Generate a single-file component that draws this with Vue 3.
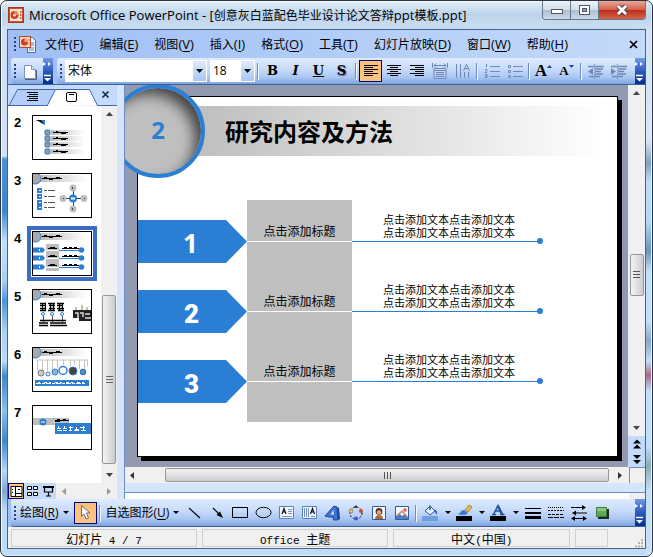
<script setup>
import { ref } from 'vue'

const menus = [
  ['文件', 'F'], ['编辑', 'E'], ['视图', 'V'], ['插入', 'I'], ['格式', 'O'],
  ['工具', 'T'], ['幻灯片放映', 'D'], ['窗口', 'W'], ['帮助', 'H'],
]
const fontName = ref('宋体')
const fontSize = ref('18')
const current = ref(4)
const thumbs = [2, 3, 4, 5, 6, 7]
const steps = ['1', '2', '3']
</script>

<template>
  <div class="window">
    <header class="titlebar">
      <svg class="app-icon" width="16" height="16" viewBox="0 0 16 16">
        <rect x="0.5" y="0.5" width="15" height="15" fill="#c9512b" stroke="#a33a1d" />
        <rect x="2" y="2" width="12" height="12" fill="#fbe3d3" />
        <circle cx="6.5" cy="8" r="4" fill="#c8401c" />
        <circle cx="6.5" cy="8" r="1.6" fill="#f8d8c4" />
        <path d="M6.500 8V4A4 4 0 0 1 10.500 8Z" fill="#e89068" />
        <path d="M12 5h1.500M12 8h1.500M12 11h1.500" stroke="#b03c1a" stroke-width="1.500" />
      </svg>
      <h1><span class="latin">Microsoft Office PowerPoint - [</span>创意灰白蓝配色毕业设计论文答辩<span class="latin">ppt</span>模板<span class="latin">.ppt]</span></h1>
      <div class="controls">
        <button class="ctl" aria-label="最小化">
          <svg width="14" height="12" viewBox="0 0 14 12"><rect x="1.500" y="5.500" width="11" height="4" fill="#fff" stroke="#535666" /></svg>
        </button>
        <button class="ctl" aria-label="还原">
          <svg width="14" height="12" viewBox="0 0 14 12"><rect x="1.500" y="1.500" width="10" height="9" fill="#fff" stroke="#535666" /><rect x="4.500" y="4.500" width="4" height="3" fill="#8aa4c4" stroke="#535666" /></svg>
        </button>
        <button class="ctl close" aria-label="关闭">
          <svg width="14" height="12" viewBox="0 0 14 12"><path d="M3 2l8 8M11 2l-8 8" stroke="#5a4250" stroke-width="5" /><path d="M3 2l8 8M11 2l-8 8" stroke="#fff" stroke-width="2.800" /></svg>
        </button>
      </div>
    </header>

    <main class="client">
      <nav class="menubar">
        <i class="grip"></i>
        <svg class="doc-icon" width="18" height="17" viewBox="0 0 18 17">
          <path d="M8.500 1.500h5l3 3v12h-8z" fill="#f3f6fc" stroke="#4b6ba8" />
          <path d="M12 7h3M12 9h3M10 12h5M10 14h5" stroke="#5f84c4" />
          <rect x="0.500" y="0.500" width="11" height="11" fill="#f6d4c4" stroke="#b8482a" />
          <circle cx="5.500" cy="6" r="3.500" fill="#c8401c" />
          <path d="M5.500 6V2.500A3.500 3.500 0 0 1 9 6Z" fill="#f0a884" />
          <path d="M9.500 4h1M9.500 8h1" stroke="#b03c1a" />
        </svg>
        <div class="menu-items">
          <button v-for="m in menus" :key="m[1]">{{ m[0] }}<span class="latin">(<u>{{ m[1] }}</u>)</span></button>
        </div>
        <button class="menu-close" aria-label="关闭文档">
          <svg width="9" height="9" viewBox="0 0 9 9"><path d="M1 1l7 7M8 1l-7 7" stroke="#000" stroke-width="1.700" /></svg>
        </button>
      </nav>

      <div class="toolbars">
        <div class="bar short">
          <i class="grip"></i>
          <button class="tool" aria-label="新建">
            <svg width="17" height="17" viewBox="0 0 17 17"><path d="M3.500 2.500h7l4 4v9h-11z" fill="#fff" stroke="#7f93b5" /><path d="M10.500 2.500v4h4" fill="#d5dff0" stroke="#7f93b5" /><path d="M4 16.500h11.500V7" fill="none" stroke="#4c5f8a" /></svg>
          </button>
          <button class="cap" aria-label="更多按钮">
            <svg width="9" height="22" viewBox="0 0 9 22"><path d="M0 2l3 2-3 2zM5 2l3 2-3 2z" fill="#fff" /><path d="M1 15.500h7" stroke="#fff" stroke-width="1.500" /><path d="M1 18h7l-3.500 3.500z" fill="#fff" /></svg>
          </button>
        </div>
        <div class="bar long">
          <i class="grip"></i>
          <span class="combo font">
            <select v-model="fontName" aria-label="字体"><option>宋体</option><option>黑体</option></select>
            <svg width="13" height="20" viewBox="0 0 13 20"><path d="M3 8h7l-3.500 4z" fill="#000" /></svg>
          </span>
          <span class="combo size">
            <select v-model="fontSize" aria-label="字号"><option>18</option><option>24</option></select>
            <svg width="13" height="20" viewBox="0 0 13 20"><path d="M3 8h7l-3.500 4z" fill="#000" /></svg>
          </span>
          <i class="sep"></i>
          <button class="tool letter">B</button>
          <button class="tool letter it">I</button>
          <button class="tool letter un">U</button>
          <button class="tool letter sh">S</button>
          <i class="sep"></i>
          <button class="tool on" aria-label="左对齐">
            <svg width="16" height="14" viewBox="0 0 16 14"><path d="M1 1.500h14M1 3.500h9M1 5.500h14M1 7.500h9M1 9.500h14M1 11.500h9" stroke="#000" /></svg>
          </button>
          <button class="tool" aria-label="居中">
            <svg width="16" height="14" viewBox="0 0 16 14"><path d="M1 1.500h14M4 3.500h8M1 5.500h14M4 7.500h8M1 9.500h14M4 11.500h8" stroke="#000" /></svg>
          </button>
          <button class="tool" aria-label="右对齐">
            <svg width="16" height="14" viewBox="0 0 16 14"><path d="M1 1.500h14M6 3.500h9M1 5.500h14M6 7.500h9M1 9.500h14M6 11.500h9" stroke="#000" /></svg>
          </button>
          <button class="tool" aria-label="分散对齐">
            <svg width="16" height="16" viewBox="0 0 16 16"><path d="M0.500 0v5M15.500 0v5M2 2.500h12M4 0.500l-2 2 2 2M12 0.500l2 2-2 2M2 5.500h12v10h-12zM2 7.500h12M4 9.500h8M4 11.500h8M4 13.500h8" fill="none" stroke="#7089b4" /></svg>
          </button>
          <button class="tool" aria-label="更改文字方向">
            <svg width="16" height="16" viewBox="0 0 16 16"><path d="M1.500 1v14M5.500 1v14M9.500 9v6M13.500 9v6M8.500 8l3-7 3 7M9.500 5.500h4" fill="none" stroke="#7089b4" /></svg>
          </button>
          <i class="sep"></i>
          <button class="tool" aria-label="编号">
            <svg width="16" height="16" viewBox="0 0 16 16"><path d="M6 3.500h10M6 8.500h10M6 13.500h10M2.500 1v3M1 6.500h2v1l-2 2h2M1 11.500h2v3h-2M1 13h2" fill="none" stroke="#7089b4" /></svg>
          </button>
          <button class="tool" aria-label="项目符号">
            <svg width="16" height="16" viewBox="0 0 16 16"><path d="M6 3.500h10M6 8.500h10M6 13.500h10" stroke="#7089b4" /><path d="M1.500 2.500h2v2h-2zM1.500 7.500h2v2h-2zM1.500 12.500h2v2h-2z" fill="none" stroke="#7089b4" /></svg>
          </button>
          <i class="sep"></i>
          <button class="tool letter grow" aria-label="增大字号">A<svg width="5" height="14" viewBox="0 0 5 14"><path d="M0 4l2.500-3 2.500 3z" fill="#1c449c" /></svg></button>
          <button class="tool letter shrink" aria-label="减小字号">A<svg width="5" height="14" viewBox="0 0 5 14"><path d="M0 1h5l-2.500 3z" fill="#1c449c" /></svg></button>
          <i class="sep"></i>
          <button class="tool" aria-label="减少缩进量">
            <svg width="16" height="15" viewBox="0 0 16 15"><path d="M0 2.500h16M7 5h8M7 7.500h6M7 10h8M1 12.500h11" stroke="#7089b4" stroke-width="1.500" /><path d="M5 4v7L0 7.500z" fill="#7089b4" /><path d="M6.500 0v15" stroke="#7089b4" stroke-dasharray="1 1" /></svg>
          </button>
          <button class="tool" aria-label="增加缩进量">
            <svg width="16" height="15" viewBox="0 0 16 15"><path d="M0 2.500h16M7 5h8M7 7.500h6M7 10h8M1 12.500h11" stroke="#7089b4" stroke-width="1.500" /><path d="M0 4v7l5-3.500z" fill="#7089b4" /><path d="M6.500 0v15" stroke="#7089b4" stroke-dasharray="1 1" /></svg>
          </button>
          <button class="cap" aria-label="更多按钮">
            <svg width="9" height="22" viewBox="0 0 9 22"><path d="M0 2l3 2-3 2zM5 2l3 2-3 2z" fill="#fff" /><path d="M1 15.500h7" stroke="#fff" stroke-width="1.500" /><path d="M1 18h7l-3.500 3.500z" fill="#fff" /></svg>
          </button>
        </div>
      </div>

      <div class="workspace">
        <aside class="pane">
          <div class="tabs">
            <svg class="tab-shapes" width="109" height="18" viewBox="0 0 109 18">
              <path d="M0 17.500H1L9.500 1.500H46.500L50 7 44 17.500z" fill="#b4cef8" stroke="#3f66b8" />
              <path d="M39 18L47.500 1.500H81.500L89.500 17.500" fill="#fff" stroke="#3f66b8" />
              <path d="M0 17.500h39M89 17.500h20" stroke="#3f66b8" />
              <path d="M19 4.500h11M21 6.500h9M19 8.500h11M21 10.500h9M19 12.500h11" stroke="#000" />
              <rect x="58.500" y="4.500" width="10" height="9" rx="1.500" fill="none" stroke="#000" />
              <path d="M61 6.500h5" stroke="#000" />
              <path d="M94.500 3.500l6 6M100.500 3.500l-6 6" stroke="#1a2c50" stroke-width="1.700" />
            </svg>
          </div>
          <div class="list-area">
            <ol class="thumbs">
              <li v-for="n in thumbs" :key="n" :class="{ current: n === current }" @click="current = n">
                <b>{{ n }}</b>
                <span class="frame">
                  <svg width="58" height="43" viewBox="0 0 58 43">
                    <defs>
                      <linearGradient id="fade"><stop offset="0" stop-color="#bdbdbd" /><stop offset="1" stop-color="#fff" /></linearGradient>
                    </defs>
                    <g v-if="n > 2 && n < 7">
                      <rect x="7" y="1" width="47" height="7" fill="url(#fade)" />
                      <circle cx="2.500" cy="4.500" r="5.500" fill="#a9a9a9" stroke="#2a7fd5" />
                      <path d="M9 4.500h20M11 3.500h3M16 5.500h4M23 3.500h4" stroke="#000" fill="none" />
                    </g>
                    <g v-if="n === 2">
                      <path d="M2 4h10v5l-4-2-2-2z" fill="#2a7fd5" /><path d="M3 4h5l3 4z" fill="#111" />
                      <g v-for="y in [14, 20, 26, 33]" :key="y">
                        <rect x="18" :y="y" width="34" height="5" fill="url(#fade)" />
                        <rect x="12" :y="y" width="5" height="5" rx="1" fill="#999" stroke="#2a7fd5" />
                        <path :d="`M20 ${y + 2.5}h15M23 ${y + 1.5}h2M28 ${y + 3.5}h5`" stroke="#000" fill="none" />
                      </g>
                    </g>
                    <g v-else-if="n === 3">
                      <g v-for="y in [14, 20, 26, 31]" :key="y">
                        <rect x="4" :y="y" width="5" height="5" fill="#2a7fd5" /><path :d="`M6 ${y + 2.5}h2`" stroke="#fff" />
                        <path :d="`M11 ${y + 2.5}h3M15 ${y + 2.5}h7`" stroke="#555" />
                      </g>
                      <path d="M40.500 15v20M32 24.500h18" stroke="#333" />
                      <circle v-for="p in [[40, 14], [30, 24.5], [51, 24.5], [40, 35]]" :key="p.join()" :cx="p[0]" :cy="p[1]" r="3.400" fill="#bdbdbd" />
                      <circle cx="40" cy="24.500" r="4" fill="#2a7fd5" /><path d="M38 24.500h4" stroke="#fff" stroke-width="2" />
                      <path d="M39.500 13v2M30 24.500h1M51 24.500h1M39.500 34v2" stroke="#444" />
                    </g>
                    <g v-else-if="n === 4">
                      <rect x="13" y="12" width="13" height="27" fill="#bdbdbd" />
                      <g v-for="y in [18, 26, 35]" :key="y">
                        <path :d="`M0 ${y - 2.5}h10l2 2.500-2 2.500H0z`" fill="#2a7fd5" /><path :d="`M6.500 ${y - 1}v2`" stroke="#fff" />
                        <path :d="`M15 ${y - 1.5}h9M17 ${y - 2.5}h5`" stroke="#000" fill="none" />
                        <path :d="`M13 ${y + 0.5}h13`" stroke="#fff" />
                        <path :d="`M26 ${y + 0.5}h22`" stroke="#2a7fd5" />
                        <path :d="`M29 ${y - 1.5}h17M31 ${y - 2.5}h3M36 ${y - 2.5}h3M41 ${y - 2.5}h3`" stroke="#000" fill="none" />
                        <circle cx="48.500" :cy="y" r="2.800" fill="#2a7fd5" />
                      </g>
                    </g>
                    <g v-else-if="n === 5">
                      <path d="M7 13.500h6M15 13.500h7M24 13.500h7M7 15.500h6M16 15.500h6M24 15.500h6M7 18.500h6M16 18.500h6M24 18.500h7M7 20.500h6M15 20.500h7M25 20.500h6" stroke="#000" stroke-width="1.500" />
                      <path d="M9.500 13v8M12.500 13v8M17.500 13v8M20.500 13v8M26.500 13v8M29.500 13v8" stroke="#000" />
                      <circle v-for="x in [10, 19, 29]" :key="x" :cx="x" cy="24" r="1.500" fill="#fff" stroke="#2a7fd5" />
                      <path d="M10.500 26v6M19.500 26v6M29.500 26v6" stroke="#555" />
                      <path d="M7 30.500h26M6 33h9M17 33h16M6 35.500h9M17 35.500h17" stroke="#000" stroke-width="1.500" />
                      <path d="M43 20v-3M49 20v-5M54 20v-3" stroke="#b4c8a8" stroke-width="2" />
                      <path d="M40 20h18v11H46v-3h-6z" fill="#222" /><path d="M42 23h3v5M47 23h3v4M52 24h5M52 28h6" stroke="#ddd" stroke-width="1.500" fill="none" />
                    </g>
                    <g v-else-if="n === 6">
                      <path d="M3.500 12h51M4.500 12v11M9.500 12v10M14.500 12v11M19.500 12v9M24.500 12v8M30.500 12v5M37.500 12v6M41.500 12v5M46.500 12v9M51.500 12v9M54.500 12v6" stroke="#c4c4c4" />
                      <circle cx="8" cy="25" r="3" fill="#ccc" stroke="#777" /><circle cx="15" cy="26" r="2" fill="#eee" stroke="#2a7fd5" />
                      <circle cx="22" cy="24" r="3" fill="#8bb5df" stroke="#2a7fd5" /><circle cx="30" cy="22.500" r="4" fill="#fff" stroke="#2a7fd5" stroke-width="1.500" />
                      <circle cx="40" cy="23" r="4" fill="#444" stroke="#2a7fd5" /><circle cx="50" cy="24" r="2.500" fill="#888" stroke="#2a7fd5" stroke-width="1.500" />
                      <rect x="2" y="32" width="54" height="6" fill="#2a7fd5" />
                      <path d="M3 35.500h50" stroke="#fff" stroke-dasharray="5 1 3 1" /><path d="M5 34.500h47" stroke="#fff" stroke-dasharray="2 4 3 2" />
                    </g>
                    <g v-else>
                      <rect x="0" y="12" width="36" height="7" fill="#bdbdbd" /><circle cx="10" cy="16" r="3.500" fill="#2a7fd5" /><path d="M8 16h4" stroke="#fff" />
                      <path d="M22 14.500h14M24 13.500h3M30 13.500h3M22 15.500h5" stroke="#000" fill="none" />
                      <rect x="22" y="17" width="36" height="11" fill="#2a7fd5" />
                      <path d="M24 22.500h4M30 22.500h4M36 21.500h4M42 23.500h4M47 21.500h5M24 24.500h5M30 24.500h4M36 24.500h3M41 24.500h5M48 24.500h5M25.500 20v2M31.500 20v2M37.500 20v5M43.500 21v4M50.500 20v4" stroke="#fff" fill="none" />
                    </g>
                  </svg>
                </span>
              </li>
            </ol>
            <div class="vscroll">
              <svg class="arrow" width="7" height="4" viewBox="0 0 7 4"><path d="M0 4h7L3.500 0z" fill="#444" /></svg>
              <i class="gap-pane"></i>
              <span class="thumb-v"><svg width="7" height="8" viewBox="0 0 7 8"><path d="M0 .5h7M0 3.500h7M0 6.500h7" stroke="#666" /></svg></span>
              <svg class="arrow" width="7" height="4" viewBox="0 0 7 4"><path d="M0 0h7L3.500 4z" fill="#444" /></svg>
            </div>
          </div>
          <div class="views">
            <button class="on" aria-label="普通视图"><svg width="13" height="11" viewBox="0 0 13 11"><path d="M1 .5h11v10H1zM5.500 .5v10M5.500 7.500h6.500" fill="#fff" stroke="#000" /><path d="M2.500 3v1M2.500 6v1M8 3.500h2" stroke="#000" /></svg></button>
            <button aria-label="浏览视图"><svg width="11" height="11" viewBox="0 0 11 11"><path d="M.5 .5h4v3h-4zM6.500 .5h4v3h-4zM.5 6.500h4v3h-4zM6.500 6.500h4v3h-4z" fill="#fff" stroke="#000" /></svg></button>
            <button aria-label="幻灯片放映"><svg width="11" height="11" viewBox="0 0 11 11"><path d="M0 1h11" stroke="#000" stroke-width="2" /><path d="M1.500 1v5h8v-5M5.500 6v4M3 10h5" fill="none" stroke="#000" stroke-width="1.200" /></svg></button>
            <span class="mini-scroll">
              <svg width="4" height="7" viewBox="0 0 4 7"><path d="M4 0v7L0 3.500z" fill="#999" /></svg>
              <svg width="4" height="7" viewBox="0 0 4 7"><path d="M0 0v7l4-3.500z" fill="#999" /></svg>
            </span>
          </div>
        </aside>

        <section class="editor">
          <div class="stage-row">
            <div class="stage">
              <article class="slide">
                <h2>研究内容及方法</h2>
                <div class="steps">
                  <div class="arrows">
                    <div v-for="s in steps" :key="s" class="cell">
                      <svg width="109" height="43" viewBox="0 0 109 43"><path d="M0 0h88l21 21.500L88 43H0z" fill="#2a7fd5" /></svg>
                      <strong :class="{ poster: s !== '1' }">{{ s }}</strong>
                    </div>
                  </div>
                  <div class="labels">
                    <div v-for="s in steps" :key="s" class="cell"><span>点击添加标题</span></div>
                  </div>
                  <div class="notes">
                    <div v-for="s in steps" :key="s" class="cell">
                      <p>点击添加文本点击添加文本<br>点击添加文本点击添加文本</p>
                      <i class="dot"></i>
                    </div>
                  </div>
                </div>
              </article>
              <div class="badge">2</div>
            </div>
            <div class="vscroll main">
              <svg class="arrow" width="7" height="4" viewBox="0 0 7 4"><path d="M0 4h7L3.500 0z" fill="#444" /></svg>
              <i class="gap-main"></i>
              <span class="thumb-v short-thumb"><svg width="7" height="8" viewBox="0 0 7 8"><path d="M0 .5h7M0 3.500h7M0 6.500h7" stroke="#555" /></svg></span>
              <i class="rest"></i>
              <svg class="arrow" width="7" height="4" viewBox="0 0 7 4"><path d="M0 0h7L3.500 4z" fill="#444" /></svg>
              <span class="pager">
                <svg width="8" height="25" viewBox="0 0 8 25"><path d="M0 4.500L4 .5l4 4zM0 9.500l4-4 4 4zM0 16h8l-4 4zM0 21h8l-4 4z" fill="#000" /></svg>
              </span>
            </div>
          </div>
          <div class="hscroll">
            <svg width="4" height="7" viewBox="0 0 4 7"><path d="M4 0v7L0 3.500z" fill="#333" /></svg>
            <span class="thumb-h"><svg width="9" height="7" viewBox="0 0 9 7"><path d="M1.500 0v7M4.500 0v7M7.500 0v7" stroke="#555" /></svg></span>
            <svg width="4" height="7" viewBox="0 0 4 7"><path d="M0 0v7l4-3.500z" fill="#333" /></svg>
            <i class="corner"></i>
          </div>
          <div class="splitter"></div>
          <div class="note-pane"><i></i></div>
        </section>
      </div>

      <div class="bar drawing">
        <i class="grip"></i>
        <button class="text-btn draw">绘图(<u>R</u>)<i class="caret"></i></button>
        <button class="tool on" aria-label="选择对象">
          <svg width="14" height="17" viewBox="0 0 14 17"><path d="M3.500 1.500v11l2.500-2.500 2 5 2.500-1-2-5h3.500z" fill="#fff" stroke="#5c6e96" /></svg>
        </button>
        <i class="sep"></i>
        <button class="text-btn">自选图形(<u>U</u>)<i class="caret"></i></button>
        <button class="tool" aria-label="直线"><svg width="16" height="16" viewBox="0 0 16 16"><path d="M2 3l11 10" stroke="#000" stroke-width="1.100" /></svg></button>
        <button class="tool" aria-label="箭头"><svg width="16" height="16" viewBox="0 0 16 16"><path d="M3 3l6 6" stroke="#000" stroke-width="1.100" /><path d="M13 13L6.500 10l3.500-3.500z" fill="#000" /></svg></button>
        <button class="tool" aria-label="矩形"><svg width="17" height="14" viewBox="0 0 17 14"><path d="M.5 1.500h15v10H.5z" fill="none" stroke="#000" /></svg></button>
        <button class="tool" aria-label="椭圆"><svg width="17" height="14" viewBox="0 0 17 14"><ellipse cx="8.500" cy="6.500" rx="7.500" ry="5.200" fill="none" stroke="#000" /></svg></button>
        <button class="tool" aria-label="文本框"><svg width="16" height="14" viewBox="0 0 16 14"><path d="M.5 .5h14v12H.5z" fill="#f4f7fd" stroke="#5d7fbe" /><path d="M3 8l2-5.500L7 8M3.500 6h3" fill="none" stroke="#111" stroke-width="1.200" /><path d="M9 3.500h4M9 5.500h4M9 7.500h4M3 10.500h10" stroke="#7090c8" /></svg></button>
        <button class="tool" aria-label="竖排文本框"><svg width="16" height="14" viewBox="0 0 16 14"><path d="M.5 .5h14v12H.5z" fill="#f4f7fd" stroke="#5d7fbe" /><path d="M8.500 8l2-5.500 2 5.500M9 6h3" fill="none" stroke="#111" stroke-width="1.200" /><path d="M2.500 2v9M4.500 2v9M6.500 2v9M9 10.500h4" stroke="#7090c8" /></svg></button>
        <button class="tool" aria-label="艺术字"><svg width="17" height="16" viewBox="0 0 17 16"><path d="M1 11L10 1l3 1 1 13H9.500l-.5-3H5z" fill="#3f74d2" stroke="#1e479c" /><path d="M6.500 9.500L9.500 5l.5 4.500z" fill="#dce9fc" /><path d="M13 2l2 1 1 11-2 1z" fill="#1e479c" /></svg></button>
        <button class="tool" aria-label="图示"><svg width="16" height="16" viewBox="0 0 16 16"><circle cx="8" cy="8" r="6" fill="none" stroke="#111" stroke-dasharray="2 1.500" /><circle cx="8" cy="1.800" r="1.300" fill="#333" /><circle cx="3" cy="6" r="2" fill="#e8c35c" stroke="#555" stroke-width=".5" /><circle cx="13" cy="6" r="2" fill="#cf4b38" /><circle cx="8" cy="13.500" r="2" fill="#4058d0" /></svg></button>
        <button class="tool" aria-label="剪贴画"><svg width="14" height="14" viewBox="0 0 14 14"><path d="M.5 .5h13v13H.5z" fill="#f4f7fd" stroke="#33599f" /><path d="M3 13c0-3 2-4 4-4s4 1 4 4z" fill="#b06a34" /><circle cx="7" cy="5.500" r="3.400" fill="#4c3428" /><circle cx="7" cy="6.500" r="2.200" fill="#e2a47c" /></svg></button>
        <button class="tool" aria-label="图片"><svg width="14" height="14" viewBox="0 0 14 14"><path d="M.5 .5h13v13H.5z" fill="#f4f7fd" stroke="#33599f" /><path d="M1 10l3-3 3 3 3-2 3 3v2H1z" fill="#4b7cc4" /><path d="M2 10l5-5 5 6" fill="none" stroke="#c88464" stroke-width="1.500" /><circle cx="10" cy="4" r="1.800" fill="#e0603c" /></svg></button>
        <i class="sep"></i>
        <button class="tool" aria-label="填充颜色"><svg width="17" height="17" viewBox="0 0 17 17"><path d="M3 7l5-5 5 5-5 4z" fill="#e5edf9" stroke="#2d569e" /><path d="M8 6V1.500M12.500 6c2 1 2 2 2 4" fill="none" stroke="#2d569e" stroke-width="1.500" /><path d="M0 12h16v5H0z" fill="#6ba0dc" /></svg></button>
        <button class="drop" aria-label="填充颜色选项"><i class="caret"></i></button>
        <button class="tool" aria-label="线条颜色"><svg width="17" height="17" viewBox="0 0 17 17"><path d="M9 6l4-5 3 2-4 5z" fill="#e9bd4c" stroke="#8a6a24" stroke-width=".7" /><path d="M1 10c4 0 3-4 7-4l4 3c-3 3-6 2-11 1z" fill="#3f74d2" /><path d="M0 12h16v5H0z" fill="#000" /></svg></button>
        <button class="drop" aria-label="线条颜色选项"><i class="caret"></i></button>
        <button class="tool" aria-label="字体颜色"><svg width="17" height="17" viewBox="0 0 17 17"><path d="M3.500 10.500L8 1.500l4.500 9M5.500 7h5M2 10.500h4M10 10.500h4.500" fill="none" stroke="#27509c" stroke-width="1.500" /><path d="M8 2l4 8.500" stroke="#27509c" stroke-width="2.200" /><path d="M0 12h16v5H0z" fill="#000" /></svg></button>
        <button class="drop" aria-label="字体颜色选项"><i class="caret"></i></button>
        <button class="tool" aria-label="线型"><svg width="16" height="14" viewBox="0 0 16 14"><path d="M0 2.500h16" stroke="#000" /><path d="M0 7h16" stroke="#000" stroke-width="2" /><path d="M0 11.500h16" stroke="#000" stroke-width="3" /></svg></button>
        <button class="tool" aria-label="虚线线型"><svg width="16" height="14" viewBox="0 0 16 14"><path d="M0 1.500h16" stroke="#000" stroke-dasharray="1 1" /><path d="M0 4.500h16" stroke="#000" stroke-dasharray="2 1" /><path d="M0 8.500h16" stroke="#000" stroke-dasharray="3 1" /><path d="M0 11.500h16" stroke="#000" stroke-dasharray="5 1" /></svg></button>
        <button class="tool" aria-label="箭头样式"><svg width="16" height="16" viewBox="0 0 16 16"><path d="M0 2.500h13M3 8h13M2 13.500h12" stroke="#000" stroke-width="1.200" /><path d="M11 0l4 2.500-4 2.500zM5 5.500L1 8l4 2.500zM4 11l-4 2.500 4 2.500zM12 11l4 2.500-4 2.500z" fill="#000" /></svg></button>
        <button class="tool" aria-label="阴影样式"><svg width="16" height="15" viewBox="0 0 16 15"><path d="M4 4h11v10H4z" fill="#1d2c1e" /><path d="M2.500 2.500h10v9h-10z" fill="#5fa857" stroke="#3d7b3a" /><path d="M3 3h9v3H3z" fill="#8bc982" /></svg></button>
        <button class="cap" aria-label="更多按钮">
          <svg width="9" height="22" viewBox="0 0 9 22"><path d="M0 2l3 2-3 2zM5 2l3 2-3 2z" fill="#fff" /><path d="M1 15.500h7" stroke="#fff" stroke-width="1.500" /><path d="M1 18h7l-3.500 3.500z" fill="#fff" /></svg>
        </button>
      </div>

      <footer class="status">
        <span>幻灯片<code> 4 / 7</code></span>
        <span><code>Office </code>主题</span>
        <span>中文<code>(</code>中国<code>)</code></span>
        <span class="lamp"></span>
        <svg width="9" height="9" viewBox="0 0 9 9"><path d="M7 1h2M4 4h2M7 4h2M1 7.500h2M4 7.500h2M7 7.500h2" stroke="#b0b0b0" stroke-width="2" /></svg>
      </footer>
    </main>
  </div>
</template>

<style>
body {
  background: #fff;
}
</style>

<style scoped>
* {
  box-sizing: border-box;
  margin: 0;
  padding: 0;
}
.window {
  display: flex;
  flex-direction: column;
  min-height: 100vh;
  padding: 0 6px 7px;
  border: 1px solid #2b3440;
  border-radius: 7px;
  font: 12px/16px "Open Sans", "Noto Sans CJK SC", sans-serif;
  color: #000;
  background:
    linear-gradient(180deg, #e4eef8 0, #bcd3ea 14px, #c8dcf0 24px, transparent 30px),
    linear-gradient(180deg, #cfe2f6 0, #cfe2f6 155px, #4d8fd8 158px, #3f84d2 210px, #bfe0fb 240px, #a8d0f4 280px, #4d94da 300px, #a9d2f6 330px, #b9dcfa 360px, #3f86d2 375px, #8cc0ee 410px, #3f86d2 440px, #b7dbf9 470px, #7fa6cc 490px, #bfdcf6 510px) 0 0 / 6px 100% no-repeat,
    linear-gradient(180deg, #cfe2f6 0, #d9e6f3 140px, #7fa2c4 162px, #b9dcfa 180px, #b4d9fb 220px, #6b93bb 250px, #bfe0fd 270px, #bfe0fd 320px, #85a8cc 340px, #bfe0fd 360px, #a86a86 374px, #bfe0fd 390px, #bfe0fd 445px, #8aaeb8 465px, #c6dff8 490px) 100% 0 / 6px 100% no-repeat,
    #bcdcf8;
  box-shadow: inset 1px 1px 0 #f2f8fe, inset -1px -1px 0 #e2f1fc;
}
button {
  border: 0;
  background: none;
  font: inherit;
  color: inherit;
}
svg {
  display: block;
  flex: none;
}
.latin {
  font-size: 13px;
}
.titlebar {
  display: flex;
  align-items: center;
  height: 28px;
  padding-left: 1px;
}
.titlebar h1 {
  flex: 1;
  margin-left: 5px;
  font-size: 12px;
  font-weight: 400;
  white-space: nowrap;
}
.controls {
  display: flex;
  align-self: flex-start;
  height: 19px;
  border: 1px solid #6b7788;
  border-top: 0;
  border-radius: 0 0 4px 4px;
  overflow: hidden;
}
.ctl {
  display: grid;
  place-items: center;
  width: 28px;
  border-right: 1px solid #6b7788;
  background: linear-gradient(#eef4fa 0, #d2dfec 48%, #aebfd2 52%, #c8dbec 100%);
}
.ctl.close {
  width: 46px;
  border-right: 0;
  background: linear-gradient(#e9a899 0, #d3614c 48%, #b92f17 52%, #d5664c 100%);
}
.client {
  display: flex;
  flex: 1;
  flex-direction: column;
  border: 1px solid #4f617b;
  background: #9ebef5;
}
.menubar {
  display: flex;
  align-items: center;
  height: 28px;
  padding: 0 7px 0 6px;
  background: linear-gradient(90deg, #9ebef5, #c4dafa);
}
.grip {
  flex: none;
  width: 2px;
  height: 14px;
  background: repeating-linear-gradient(#27418c 0 2px, transparent 2px 4px);
}
.doc-icon {
  margin-left: 3px;
}
.menu-items {
  display: flex;
  flex: 1;
  gap: 16px;
  margin-left: 8px;
  white-space: nowrap;
}
u {
  text-underline-offset: 2px;
}
.toolbars {
  display: flex;
  gap: 4px;
  height: 27px;
  padding-left: 3px;
  background: linear-gradient(90deg, #9ebef5, #c4dafa);
  border-bottom: 1px solid #3b619c;
}
.bar {
  display: flex;
  align-items: center;
  background: linear-gradient(#dfebfd 0, #c5dafa 45%, #a9c6f2 75%, #7fa4e0 100%);
  border-radius: 3px 0 0 3px;
}
.bar .grip {
  margin: 0 4px 0 3px;
}
.short {
  width: 42px;
}
.short .grip {
  margin: 0 2px 0 3px;
}
.long {
  flex: 1;
}
.long .grip {
  margin: 0 3px;
}
.cap {
  align-self: stretch;
  flex: none;
  width: 10px;
  margin-left: auto;
  background: linear-gradient(#6f9be8 0, #2d5bbd 50%, #00308f 100%);
}
.tool {
  display: flex;
  flex: none;
  align-items: center;
  justify-content: center;
  width: 23px;
  height: 22px;
}
.tool.on {
  border: 1px solid #000080;
  background: linear-gradient(#fdbf74, #ffc581);
}
.sep {
  flex: none;
  width: 1px;
  height: 16px;
  margin: 0 3px 0 2px;
  background: #6a8ccb;
  box-shadow: 1px 1px 0 #f1f9ff;
}
.combo {
  display: flex;
  flex: none;
  height: 22px;
  margin-right: 3px;
  border: 1px solid #fff;
  background: #fff;
}
.combo.size {
  margin-right: 0;
}
.combo select {
  flex: 1;
  min-width: 0;
  padding-left: 2px;
  border: 0;
  appearance: none;
  background: #fff;
  font: 12px/16px "Open Sans", "Noto Sans CJK SC", sans-serif;
  color: #000;
}
.combo svg {
  background: linear-gradient(#dfebfd, #a9c6f2);
}
.font {
  width: 142px;
}
.size {
  width: 45px;
}
.letter {
  font: bold 13px/20px "DejaVu Serif", serif;
}
.it {
  font-style: italic;
}
.un {
  text-decoration: underline;
}
.sh {
  text-shadow: 1px 1px 1px #557;
}
.grow {
  font: bold 17px/20px "Liberation Serif", serif;
}
.shrink {
  font: bold 13px/20px "Liberation Serif", serif;
}
.workspace {
  display: flex;
  flex: 1;
}
.pane {
  display: flex;
  flex: none;
  flex-direction: column;
  width: 109px;
  background: #fff;
}
.tabs {
  padding-top: 3px;
  background: #c4dafa;
}
.list-area {
  display: flex;
  flex: 1;
}
.thumbs {
  flex: 1;
  padding-top: 2px;
  list-style: none;
}
.thumbs li {
  display: flex;
  gap: 8px;
  height: 58px;
  padding: 2px 0 0 6px;
}
.thumbs b {
  width: 7px;
  padding-top: 5px;
  font: bold 13px/16px "Liberation Sans", sans-serif;
}
.frame {
  height: 55px;
  margin-left: -2px;
  padding: 5px;
}
.frame svg {
  border: 1px solid #000;
  width: 60px;
  height: 45px;
  background: #fff;
}
.current .frame {
  padding: 1px;
  border: 4px solid #3c6cc4;
}
.vscroll {
  display: flex;
  flex: none;
  flex-direction: column;
  align-items: center;
  width: 16px;
  padding: 6px 0;
  background: #f0f0f0;
}
.gap-pane {
  height: 179px;
}
.thumb-v {
  display: grid;
  flex: 1;
  place-items: center;
  width: 14px;
  margin-bottom: 9px;
  border: 1px solid #979797;
  border-radius: 2px;
  background: linear-gradient(90deg, #f3f3f3, #e4e4e6 45%, #c9cbce);
}
.views {
  display: flex;
  height: 16px;
  background: #c4dafa;
}
.views button {
  display: grid;
  place-items: center;
  width: 16px;
}
.views .on {
  border: 1px solid #000080;
  background: #ffc581;
}
.mini-scroll {
  display: flex;
  flex: 1;
  align-items: center;
  justify-content: space-between;
  padding: 0 6px;
  background: #f0f0f0;
}
.editor {
  display: flex;
  flex: 1;
  flex-direction: column;
  margin-left: 7px;
  border-left: 1px solid #6a8ccb;
  box-shadow: -7px 0 0 #d7e5fb;
  background: #d7e5fb;
}
.stage-row {
  display: flex;
  flex: 1;
}
.stage {
  position: relative;
  display: flex;
  flex: 1;
  padding: 11px 10px 10px 12px;
  overflow: hidden;
  background: #9399ae;
}
.slide {
  flex: 1;
  border: 1px solid #000;
  background: #fff;
  box-shadow: 4px 4px 0 #000;
}
.slide h2 {
  height: 50px;
  margin: 9px 12px 0 60px;
  padding-left: 27px;
  font: bold 24px/50px "Noto Sans CJK SC", sans-serif;
  background: linear-gradient(90deg, #bfbfbf, #e0e0e0 52%, #fff);
}
.badge {
  position: absolute;
  left: -14px;
  top: -1px;
  width: 94px;
  height: 94px;
  border: 4px solid #2a7fd5;
  border-radius: 50%;
  background: #bfbfbf;
  box-shadow: inset -9px 9px 14px -3px #444;
  color: #2a7fd5;
  font: bold 24px/84px "Open Sans", sans-serif;
  text-align: center;
}
.steps {
  display: flex;
  margin-top: 44px;
}
.arrows,
.labels,
.notes {
  padding: 6px 0;
}
.cell {
  display: flex;
  height: 70px;
}
.arrows .cell {
  display: grid;
  align-items: center;
  width: 109px;
}
.arrows .cell > * {
  grid-area: 1 / 1;
}
.arrows strong {
  padding: 4px 4px 0 0;
  text-align: center;
  color: #fff;
  font: bold 26px/30px "Open Sans", sans-serif;
}
.arrows .poster {
  padding: 6px 2px 0 0;
  font: 900 26px/30px Roboto, sans-serif;
}
.labels {
  width: 105px;
  background: #bfbfbf;
}
.labels span {
  width: 105px;
  height: 36px;
  padding-top: 17px;
  border-bottom: 1px solid #fff;
  font-size: 12px;
  line-height: 18px;
  text-align: center;
}
.notes .cell {
  align-items: flex-start;
}
.notes p {
  width: 188px;
  height: 36px;
  padding: 8px 0 0 31px;
  border-bottom: 1px solid #2a7fd5;
  font: 11px/13px "Liberation Sans", "Noto Sans CJK SC", sans-serif;
  white-space: nowrap;
}
.dot {
  width: 6px;
  height: 6px;
  margin: 32px 0 0 -3px;
  border-radius: 50%;
  background: #2a7fd5;
}
.main {
  width: 17px;
  padding-bottom: 0;
}
.gap-main {
  height: 159px;
}
.short-thumb {
  flex: none;
  height: 42px;
  margin: 0;
}
.rest {
  flex: 1;
}
.pager {
  display: grid;
  place-items: center;
  width: 17px;
  height: 31px;
  margin-top: 6px;
  background: #c4dafa;
}
.hscroll {
  display: flex;
  align-items: center;
  height: 16px;
  padding-left: 5px;
  background: #f0f0f0;
}
.thumb-h {
  display: grid;
  flex: 1;
  place-items: center;
  height: 14px;
  margin: 0 9px 0 31px;
  border: 1px solid #979797;
  border-radius: 2px;
  background: linear-gradient(#f3f3f3, #e4e4e6 45%, #c9cbce);
}
.corner {
  align-self: stretch;
  width: 16px;
  margin-left: 7px;
  border-top: 1px solid #6a8ccb;
  border-left: 1px solid #6a8ccb;
}
.splitter {
  height: 9px;
}
.note-pane {
  display: flex;
  justify-content: flex-end;
  height: 7px;
  border-top: 1px solid #6a8ccb;
  background: #fff;
}
.note-pane i {
  width: 16px;
  background: #f0f0f0;
}
.drawing {
  height: 28px;
  margin-left: 3px;
  border-bottom: 1px solid #3b619c;
}
.text-btn {
  display: flex;
  align-items: center;
  margin-right: 4px;
  padding-left: 3px;
  white-space: nowrap;
}
.draw {
  margin-right: 5px;
  padding-left: 0;
}
.caret {
  width: 0;
  border: 3px solid transparent;
  border-top: 3px solid #000;
  border-bottom: 0;
}
.text-btn .caret {
  margin-left: 4px;
}
.drop {
  display: grid;
  place-items: center;
  width: 11px;
  height: 22px;
}
.status {
  display: flex;
  gap: 5px;
  align-items: center;
  height: 21px;
  padding: 1px 2px 0 3px;
  background: #f0f0f0;
  font: 12px/17px "Noto Sans CJK SC", sans-serif;
}
.status span {
  flex: 186;
  height: 18px;
  border: 1px solid #cfcfcf;
  text-align: center;
}
.status span:nth-child(3) {
  flex: 177;
}
.status .lamp {
  flex: 31;
}
.status code {
  font: 11px/16px "Liberation Mono", monospace;
  white-space: pre;
}
.status svg {
  align-self: flex-end;
  margin-left: 21px;
}
</style>
